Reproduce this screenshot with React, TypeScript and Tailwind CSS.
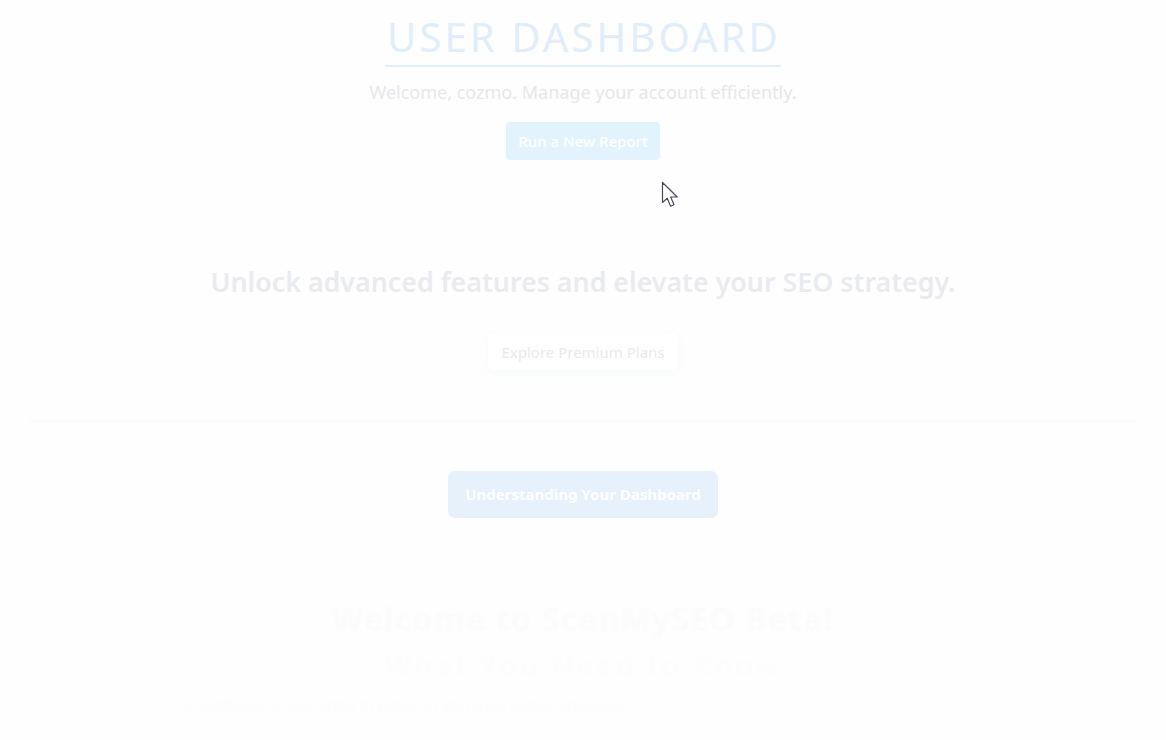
import React from "react";

function Cursor() {
  return (
    <svg
      className="pointer-events-none absolute left-[661px] top-[181px]"
      width="20"
      height="30"
      viewBox="0 0 20 30"
    >
      <path
        d="M1.5 1.5 L1.5 21.5 L6.2 17.2 L9.6 25.2 L13 23.8 L9.7 16 L16.2 16 Z"
        fill="#ffffff"
        stroke="#4b4b57"
        strokeWidth="1.2"
        strokeLinejoin="round"
      />
    </svg>
  );
}

export default function App() {
  return (
    <div
      className="relative min-h-[740px] w-full overflow-hidden bg-[#fefefe]"
      style={{ fontFamily: '"Noto Sans", "Open Sans", sans-serif' }}
    >
      {/* header */}
      <div className="flex flex-col items-center pt-[11px]">
        <h1 className="border-b-2 border-[#e3effc] pb-[2px] pl-[2px] text-[40px] leading-[52px] tracking-[3.1px] text-[#e1edfb]">
          USER DASHBOARD
        </h1>
        <p className="mt-[12px] text-[18px] leading-[26px] text-[#e6e7ea]">
          Welcome, cozmo. Manage your account efficiently.
        </p>
        <button className="mt-[17px] h-[38px] rounded-[4px] bg-[#e2f3fd] px-[12px] text-[15px] font-medium text-white">
          Run a New Report
        </button>
      </div>

      {/* premium */}
      <div className="mt-[102px] flex flex-col items-center">
        <h2 className="text-[26.8px] font-semibold leading-[40px] text-[#eaebef]">
          Unlock advanced features and elevate your SEO strategy.
        </h2>
        <button className="mt-[32px] h-[36px] rounded-[6px] bg-white px-[13px] text-[15px] text-[#e9eaee] shadow-[0_2px_8px_rgba(225,238,250,0.3)]">
          Explore Premium Plans
        </button>
      </div>

      <div className="mx-[30px] mt-[50px] h-[3px] rounded-full bg-[#fbfbfb]" />

      {/* guide */}
      <div className="mt-[48px] flex flex-col items-center">
        <button className="h-[47px] rounded-[7px] bg-[#e6f1fc] px-[17px] text-[15px] font-bold text-white">
          Understanding Your Dashboard
        </button>
      </div>

      {/* beta */}
      <div className="mt-[79px] flex flex-col items-center">
        <h2 className="text-[32px] font-bold leading-[44px] tracking-[1.2px] text-[#fcfcfc]">
          Welcome to ScanMySEO Beta!
        </h2>
        <h3 className="mt-[5px] text-[29px] font-medium leading-[38px] tracking-[3px] text-[#fdfdfd]">
          What You Need to Know
        </h3>
      </div>
      <p className="ml-[180px] mt-[8px] text-[16px] leading-[26px] text-[#fdfdfd]">
        ScanMySEO is currently in beta, so you may notice changes.
      </p>

      <Cursor />
    </div>
  );
}
